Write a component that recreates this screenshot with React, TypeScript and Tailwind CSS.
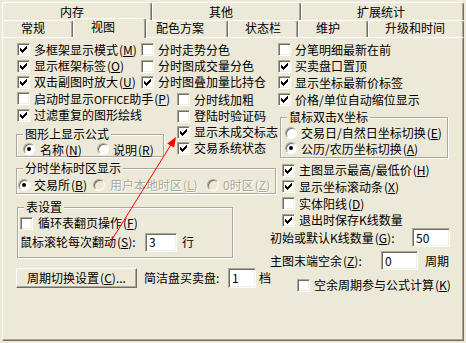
import type { ReactNode } from 'react';

const CHECK =
  'M6 0h1v1h-1z M5 1h2v1h-2z M0 2h1v1h-1z M4 2h3v1h-3z M0 3h2v1h-2z M3 3h3v1h-3z M0 4h5v1h-5z M1 5h3v1h-3z M2 6h1v1h-1z';

function Box({ checked }: { checked?: boolean }) {
  return (
    <span className="flex h-[13px] w-[13px] shrink-0 items-center justify-center border border-t-[#ACA899] border-l-[#ACA899] border-r-white border-b-white bg-white shadow-[inset_1px_1px_0_#716F64,inset_-1px_-1px_0_#F1EFE2]">
      {checked && (
        <svg width="7" height="7" viewBox="0 0 7 7" shapeRendering="crispEdges">
          <path d={CHECK} fill="#000" />
        </svg>
      )}
    </span>
  );
}

function Radio({ checked, disabled }: { checked?: boolean; disabled?: boolean }) {
  return (
    <span
      className={`flex h-[12px] w-[12px] shrink-0 items-center justify-center rounded-full border border-t-[#ACA899] border-l-[#ACA899] border-r-white border-b-white shadow-[inset_1px_1px_0_#716F64] ${
        disabled ? 'bg-[#ECE9D8]' : 'bg-white'
      }`}
    >
      {checked && <span className="h-[4px] w-[4px] rounded-full bg-black" />}
    </span>
  );
}

// mnemonic letter in brackets
function K({ k }: { k: string }) {
  return (
    <span className="ml-[1px]">
      (<u className="underline-offset-[1px]">{k}</u>)
    </span>
  );
}

function Cb({ checked, children, className = '' }: { checked?: boolean; children: ReactNode; className?: string }) {
  return (
    <div className={`flex items-center gap-[4px] whitespace-nowrap ${className}`}>
      <Box checked={checked} />
      <span className="leading-[14px]">{children}</span>
    </div>
  );
}

function Rd({ checked, disabled, children, className = '' }: { checked?: boolean; disabled?: boolean; children: ReactNode; className?: string }) {
  return (
    <div className={`flex items-center gap-[4px] whitespace-nowrap ${className}`}>
      <Radio checked={checked} disabled={disabled} />
      <span className={`leading-[13px] ${disabled ? 'text-[#ACA899] [text-shadow:1px_1px_0_#fff]' : ''}`}>{children}</span>
    </div>
  );
}

function Group({ label, className = '', children }: { label: string; className?: string; children: ReactNode }) {
  return (
    <div className={`border border-[#ACA899] shadow-[inset_1px_1px_0_#fff,1px_1px_0_#fff] ${className}`}>
      <div className="-mt-[8px] ml-[6px] mb-[1px] h-[14px] w-fit bg-[#ECE9D8] px-[2px] leading-[14px] whitespace-nowrap">{label}</div>
      {children}
    </div>
  );
}

function Field({ value, className = '' }: { value: string; className?: string }) {
  return (
    <div className={`flex shrink-0 items-center border border-t-[#ACA899] border-l-[#ACA899] border-r-white border-b-white bg-white pl-[3px] shadow-[inset_1px_1px_0_#716F64,inset_-1px_-1px_0_#F1EFE2] ${className}`}>
      {value}
    </div>
  );
}

function Tab({ label, className = '' }: { label: string; className?: string }) {
  return (
    <div className={`flex items-start rounded-t-[3px] border-t border-l border-r border-t-white border-l-white border-r-[#716F64] shadow-[inset_-1px_0_0_#ACA899] whitespace-nowrap ${className}`}>
      {label}
    </div>
  );
}

export default function App() {
  return (
    <div className="relative h-[343px] w-[466px] overflow-hidden bg-[#ECE9D8] pt-[2px] pl-[2px] text-[12px] leading-[16px] text-black [font-family:'Noto_Sans_CJK_SC','Noto_Sans',sans-serif]">
      {/* Tabs, back row */}
      <div className="flex h-[18px]">
        <Tab label="内存" className="h-[18px] w-[150px] pt-[1px] pl-[57px]" />
        <Tab label="其他" className="h-[18px] w-[149px] pt-[1px] pl-[56px]" />
        <Tab label="扩展统计" className="h-[18px] w-[163px] pt-[1px] pl-[55px]" />
      </div>
      {/* Tabs, front row */}
      <div className="flex h-[17px] items-end">
        <Tab label="常规" className="h-[17px] w-[71px] pl-[18px] leading-[14px]" />
        <Tab label="视图" className="relative z-10 -mb-[1px] h-[20px] w-[73px] bg-[#ECE9D8] pl-[17px] leading-[16px]" />
        <Tab label="配色方案" className="h-[17px] w-[82px] pl-[9px] leading-[14px]" />
        <Tab label="状态栏" className="h-[17px] w-[70px] pl-[16px] leading-[14px]" />
        <Tab label="维护" className="h-[17px] w-[70px] pl-[17px] leading-[14px]" />
        <Tab label="升级和时间" className="h-[17px] w-[96px] pl-[16px] leading-[14px]" />
      </div>

      {/* Panel */}
      <div className="flex h-[304px] w-[462px] border border-t-white border-l-white border-r-[#716F64] border-b-[#716F64] pt-[3px] pl-[13px] shadow-[inset_-1px_-1px_0_#ACA899]">
        {/* Left region */}
        <div className="flex w-[262px] shrink-0 flex-col">
          <div className="flex">
            <div className="w-[125px] pl-[1px]">
              <Cb checked className="h-[17px]">多框架显示模式<K k="M" /></Cb>
              <Cb checked className="h-[16px]">显示框架标签<K k="O" /></Cb>
              <Cb checked className="h-[16px]">双击副图时放大<K k="U" /></Cb>
            </div>
            <div>
              <Cb className="h-[17px]">分时走势分色</Cb>
              <Cb className="h-[16px]">分时图成交量分色</Cb>
              <Cb checked className="h-[16px]">分时图叠加量比持仓</Cb>
            </div>
          </div>

          <div className="flex">
            <div className="w-[161px] shrink-0">
              <Cb className="h-[17px] pl-[1px]">
                启动时显示<span className="text-[11px] tracking-[-0.3px]">OFFICE</span>助手<K k="P" />
              </Cb>
              <Cb checked className="h-[16px] pl-[1px]">过滤重复的图形绘线</Cb>
              <Group label="图形上显示公式" className="mt-[11px] w-[148px]">
                <div className="flex h-[14px] items-center pl-[6px]">
                  <Rd checked className="w-[74px] gap-[5px]">名称<K k="N" /></Rd>
                  <Rd>说明<K k="R" /></Rd>
                </div>
              </Group>
            </div>
            <div className="pt-[1px]">
              <Cb className="h-[17px]">分时线加粗</Cb>
              <Cb className="h-[16px]">登陆时验证码</Cb>
              <Cb checked className="h-[16px]">显示未成交标志</Cb>
              <Cb checked className="h-[16px]">交易系统状态</Cb>
            </div>
          </div>

          <Group label="分时坐标时区显示" className="mt-[11px] w-[260px]">
            <div className="flex h-[17px] items-center pl-[1px]">
              <Rd checked className="w-[75px] gap-[3px]">交易所<K k="B" /></Rd>
              <Rd disabled className="w-[114px] gap-[5px]">用户本地时区<K k="L" /></Rd>
              <Rd disabled className="gap-[3px]">0时区<K k="Z" /></Rd>
            </div>
          </Group>

          <Group label="表设置" className="mt-[13px] ml-[1px] w-[216px] pb-[4px]">
            <Cb className="h-[16px] gap-[5px] pl-[2px]">循环表翻页操作<K k="F" /></Cb>
            <div className="flex h-[22px] items-center pl-[2px]">
              <span className="w-[125px] whitespace-nowrap">鼠标滚轮每次翻动<K k="S" />:</span>
              <Field value="3" className="h-[19px] w-[32px]" />
              <span className="ml-[5px]">行</span>
            </div>
          </Group>

          <div className="mt-[9px] flex h-[21px] items-center">
            <button className="flex h-[20px] w-[121px] shrink-0 items-center justify-center border border-t-white border-l-white border-r-[#716F64] border-b-[#716F64] bg-[#ECE9D8] shadow-[inset_-1px_-1px_0_#ACA899] whitespace-nowrap">
              周期切换设置<K k="C" />...
            </button>
            <span className="ml-[7px] w-[84px] whitespace-nowrap">简洁盘买卖盘:</span>
            <Field value="1" className="h-[20px] w-[28px]" />
            <span className="ml-[3px]">档</span>
          </div>
        </div>

        {/* Right region */}
        <div className="flex flex-col">
          <Cb className="h-[17px]">分笔明细最新在前</Cb>
          <Cb checked className="h-[16px]">买卖盘口置顶</Cb>
          <Cb checked className="h-[17px]">显示坐标最新价标签</Cb>
          <Cb checked className="h-[17px]">价格/单位自动缩位显示</Cb>

          <Group label="鼠标双击X坐标" className="mt-[9px] ml-[2px] w-[168px] pb-[1px]">
            <Rd className="h-[15px] pl-[4px]">交易日/自然日坐标切换<K k="E" /></Rd>
            <Rd checked className="h-[16px] pl-[4px]">公历/农历坐标切换<K k="A" /></Rd>
          </Group>

          <Cb checked className="mt-[4px] ml-[4px] h-[16px]">主图显示最高/最低价<K k="H" /></Cb>
          <Cb checked className="ml-[4px] h-[17px]">显示坐标滚动条<K k="X" /></Cb>
          <Cb className="ml-[4px] h-[17px]">实体阳线<K k="D" /></Cb>
          <Cb checked className="ml-[4px] h-[16px]">退出时保存K线数量</Cb>

          <div className="-ml-[8px] flex h-[19px] items-center">
            <span className="w-[142px] whitespace-nowrap">初始或默认K线数量<K k="G" />:</span>
            <Field value="50" className="h-[19px] w-[38px]" />
          </div>
          <div className="-ml-[8px] mt-[4px] flex h-[19px] items-center">
            <span className="w-[111px] whitespace-nowrap">主图末端空余<K k="Z" />:</span>
            <Field value="0" className="h-[19px] w-[37px]" />
            <span className="ml-[7px]">周期</span>
          </div>
          <Cb className="mt-[7px] ml-[19px] h-[16px]">空余周期参与公式计算<K k="K" /></Cb>
        </div>
      </div>

      {/* Red annotation arrow */}
      <svg className="pointer-events-none absolute top-0 left-0" width="466" height="343">
        <line x1="108" y1="246" x2="172" y2="143" stroke="#FF0000" strokeWidth="1" />
        <polygon points="176,137 174.1,147.6 167.3,143.4" fill="#FF0000" />
      </svg>
    </div>
  );
}
